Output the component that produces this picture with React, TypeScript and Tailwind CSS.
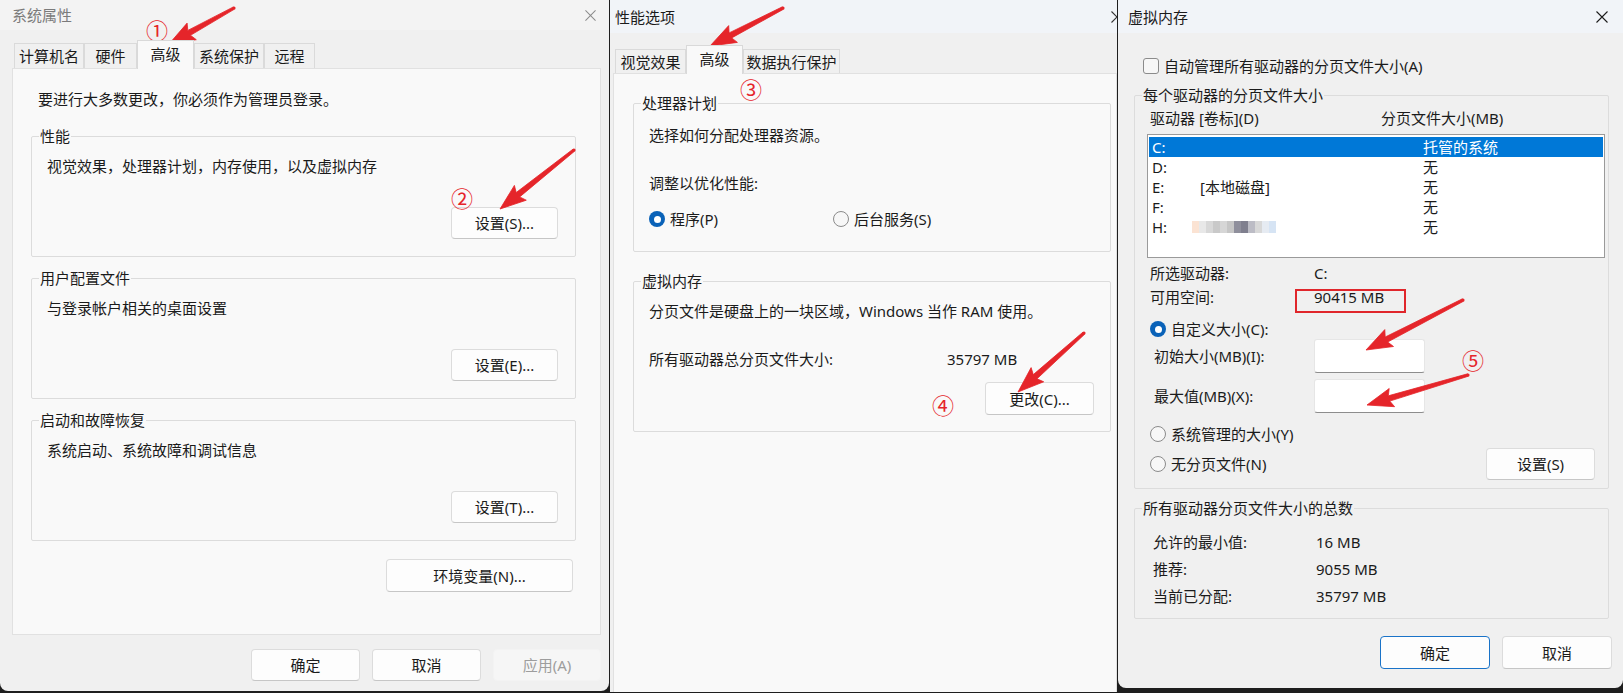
import type {ReactNode} from 'react';
import clsx from 'clsx';

const TEXT = 'text-[#1b1b1b]';

function CloseIcon({className}: {className?: string}) {
  return (
    <svg viewBox="0 0 12 12" className={className} fill="none" stroke="currentColor" strokeWidth={1.1}>
      <path d="M0.5 0.5l11 11M11.5 0.5l-11 11" />
    </svg>
  );
}

function Btn({children, className, disabled, primary}: {children: ReactNode; className?: string; disabled?: boolean; primary?: boolean}) {
  return (
    <button
      type="button"
      className={clsx(
        'flex shrink-0 items-center justify-center rounded-[4px] border text-[15px] leading-[20px]',
        disabled
          ? 'border-[#f3f3f3] bg-[#f6f6f6] text-[#9d9d9d]'
          : primary
            ? 'border-[#1a73c8] bg-[#fdfdfd] text-[#1b1b1b]'
            : 'border-[#dcdcdc] border-b-[#c6c6c6] bg-[#fdfdfd] text-[#1b1b1b]',
        className
      )}
    >
      {children}
    </button>
  );
}

function Group({title, bg, className, children}: {title: string; bg: string; className?: string; children: ReactNode}) {
  return (
    <div className={clsx('rounded-[2px] border border-[#dcdcdc]', className)}>
      <div className={clsx('relative -mt-[11px] ml-[7px] w-fit px-[1px] leading-[20px]', bg)}>{title}</div>
      {children}
    </div>
  );
}

function Radio({checked, label, className}: {checked?: boolean; label: string; className?: string}) {
  return (
    <div className={clsx('flex items-center gap-[5px] leading-[20px]', className)}>
      {checked ? (
        <span className="flex size-[16px] items-center justify-center rounded-full bg-[#0a62b8]">
          <span className="size-[7px] rounded-full bg-white" />
        </span>
      ) : (
        <span className="size-[16px] rounded-full border border-[#8b8b8b] bg-[#f7f7f7]" />
      )}
      <span>{label}</span>
    </div>
  );
}

type Tab = {label: string; width: string; active?: boolean};

function TabRow({tabs, short}: {tabs: Tab[]; short: string}) {
  return (
    <div className="flex items-end pl-[2px]">
      {tabs.map((tab) =>
        tab.active ? (
          <div
            key={tab.label}
            className={clsx('relative z-10 -mb-px flex h-[29px] items-start justify-center border border-b-0 border-[#d9d9d9] bg-[#f9f9f9] pt-[3px] leading-[20px]', tab.width)}
          >
            {tab.label}
          </div>
        ) : (
          <div key={tab.label} className={clsx('flex items-center justify-center border border-b-0 border-[#dadada] leading-[20px]', short, tab.width)}>
            {tab.label}
          </div>
        )
      )}
    </div>
  );
}

function SystemProperties() {
  const groups = [
    {title: '性能', text: '视觉效果，处理器计划，内存使用，以及虚拟内存', button: '设置(S)...'},
    {title: '用户配置文件', text: '与登录帐户相关的桌面设置', button: '设置(E)...'},
    {title: '启动和故障恢复', text: '系统启动、系统故障和调试信息', button: '设置(T)...'},
  ];

  return (
    <section className="flex h-[691px] w-[609px] shrink-0 flex-col overflow-hidden rounded-b-[8px] bg-[#f0f0f0]">
      <header className="flex h-[30px] items-center justify-between bg-[#f3f3f3] pl-[12px] pr-[13px] text-[#7b7b7b]">
        <span className="leading-[20px]">系统属性</span>
        <CloseIcon className="size-[11px] text-[#8a8a8a]" />
      </header>
      <div className="flex flex-col pl-[12px] pr-[8px] pt-[10px]">
        <TabRow
          short="h-[25px]"
          tabs={[
            {label: '计算机名', width: 'w-[70px]'},
            {label: '硬件', width: 'w-[53px]'},
            {label: '高级', width: 'w-[57px]', active: true},
            {label: '系统保护', width: 'w-[70px]'},
            {label: '远程', width: 'w-[51px]'},
          ]}
        />
        <div className="flex h-[567px] flex-col border border-[#e1e1e1] bg-[#f9f9f9]">
          <p className="ml-[25px] mt-[20px] leading-[20px]">要进行大多数更改，你必须作为管理员登录。</p>
          <div className="ml-[18px] mr-[24px] mt-[27px] flex flex-col gap-[21px]">
            {groups.map((g) => (
              <Group key={g.title} title={g.title} bg="bg-[#f9f9f9]" className="h-[121px]">
                <p className="ml-[15px] mt-[10px] leading-[20px]">{g.text}</p>
                <div className="mr-[17px] mt-[31px] flex justify-end">
                  <Btn className="h-[32px] w-[107px]">{g.button}</Btn>
                </div>
              </Group>
            ))}
          </div>
          <Btn className="mr-[27px] mt-[18px] h-[33px] w-[187px] self-end">环境变量(N)...</Btn>
        </div>
        <div className="mt-[14px] flex justify-end gap-[12px]">
          <Btn className="h-[32px] w-[109px]">确定</Btn>
          <Btn className="h-[32px] w-[109px]">取消</Btn>
          <Btn className="h-[32px] w-[108px]" disabled>
            应用(A)
          </Btn>
        </div>
      </div>
    </section>
  );
}

function PerformanceOptions() {
  return (
    <section className="flex h-[692px] w-[507px] shrink-0 flex-col overflow-hidden bg-[#f0f0f0]">
      <header className="flex h-[33px] items-center justify-between bg-[#f1f4f8] pl-[5px]">
        <span className="leading-[20px]">性能选项</span>
        <CloseIcon className="-mr-[6px] size-[12px] text-[#333]" />
      </header>
      <div className="flex flex-1 flex-col pl-[3px] pt-[12px]">
        <TabRow
          short="h-[24px]"
          tabs={[
            {label: '视觉效果', width: 'w-[71px]'},
            {label: '高级', width: 'w-[57px]', active: true},
            {label: '数据执行保护', width: 'w-[97px]'},
          ]}
        />
        <div className="flex flex-1 flex-col border border-b-0 border-[#e1e1e1] bg-[#f9f9f9] pl-[19px] pr-[5px]">
          <Group title="处理器计划" bg="bg-[#f9f9f9]" className="mt-[29px] pb-[22px]">
            <div className="pl-[15px]">
              <p className="mt-[12px] leading-[20px]">选择如何分配处理器资源。</p>
              <p className="mt-[28px] leading-[20px]">调整以优化性能:</p>
              <div className="mt-[16px] flex">
                <Radio checked label="程序(P)" className="w-[184px]" />
                <Radio label="后台服务(S)" />
              </div>
            </div>
          </Group>
          <Group title="虚拟内存" bg="bg-[#f9f9f9]" className="mt-[29px] pb-[16px]">
            <div className="pl-[15px] pr-[16px]">
              <p className="mt-[10px] leading-[20px]">分页文件是硬盘上的一块区域，Windows 当作 RAM 使用。</p>
              <div className="mt-[28px] flex leading-[20px]">
                <span className="w-[298px]">所有驱动器总分页文件大小:</span>
                <span>35797 MB</span>
              </div>
              <div className="mt-[13px] flex justify-end">
                <Btn className="h-[33px] w-[109px]">更改(C)...</Btn>
              </div>
            </div>
          </Group>
        </div>
      </div>
    </section>
  );
}

const drives = [
  {drive: 'C:', label: '', size: '托管的系统'},
  {drive: 'D:', label: '', size: '无'},
  {drive: 'E:', label: '[本地磁盘]', size: '无'},
  {drive: 'F:', label: '', size: '无'},
  {drive: 'H:', label: null, size: '无'},
];

const mosaic = ['#fbe3d3', '#e8e8e8', '#d8d8d8', '#c9c9c9', '#d6d6d6', '#c6c6c6', '#8f8f9c', '#7f7f8e', '#bcbcc5', '#d8d8d8', '#e6ebf2', '#d6e4f4'];

function HiddenLabel() {
  return (
    <span className="-ml-[8px] flex h-[12px] blur-[0.5px]">
      {mosaic.map((c, i) => (
        <span key={i} className="h-full w-[7px]" style={{backgroundColor: c}} />
      ))}
    </span>
  );
}

function VirtualMemory() {
  return (
    <section className="flex h-[688px] w-[505px] shrink-0 flex-col overflow-hidden rounded-b-[8px] bg-[#f0f0f0]">
      <header className="flex h-[33px] items-center justify-between bg-[#f1f4f8] pl-[10px] pr-[15px]">
        <span className="leading-[20px]">虚拟内存</span>
        <CloseIcon className="size-[12px] text-[#1b1b1b]" />
      </header>
      <div className="flex flex-col pl-[16px] pr-[14px]">
        <label className="ml-[9px] mt-[23px] flex items-center gap-[5px] leading-[20px]">
          <span className="size-[16px] rounded-[3px] border border-[#8b8b8b] bg-[#f7f7f7]" />
          自动管理所有驱动器的分页文件大小(A)
        </label>

        <Group title="每个驱动器的分页文件大小" bg="bg-[#f0f0f0]" className="mt-[19px] pb-[8px]">
          <div className="ml-[15px] mt-[3px] flex leading-[20px]">
            <span className="w-[231px]">驱动器 [卷标](D)</span>
            <span>分页文件大小(MB)</span>
          </div>
          <div className="ml-[12px] mr-[3px] mt-[6px] h-[124px] border border-[#9a9a9a] bg-white px-px pt-[2px]">
            {drives.map((d, i) => (
              <div key={d.drive} className={clsx('flex h-[20px] items-center pl-[3px] leading-[20px]', i === 0 && 'bg-[#0078d7] text-white')}>
                <span className="w-[48px]">{d.drive}</span>
                <span className="flex w-[223px] items-center">{d.label === null ? <HiddenLabel /> : d.label}</span>
                <span>{d.size}</span>
              </div>
            ))}
          </div>
          <div className="ml-[15px] mt-[5px] flex leading-[20px]">
            <span className="w-[164px]">所选驱动器:</span>
            <span>C:</span>
          </div>
          <div className="ml-[15px] mt-[4px] flex leading-[20px]">
            <span className="w-[164px]">可用空间:</span>
            <span>90415 MB</span>
          </div>
          <Radio checked label="自定义大小(C):" className="ml-[15px] mt-[12px]" />
          <div className="ml-[19px] flex h-[34px] items-center">
            <span className="w-[160px]">初始大小(MB)(I):</span>
            <span className="h-full w-[111px] rounded-[3px] border border-[#e6e6e6] border-b-[#8d8d8d] bg-white" />
          </div>
          <div className="ml-[19px] mt-[6px] flex h-[34px] items-center">
            <span className="w-[160px]">最大值(MB)(X):</span>
            <span className="h-full w-[111px] rounded-[3px] border border-[#e6e6e6] border-b-[#8d8d8d] bg-white" />
          </div>
          <Radio label="系统管理的大小(Y)" className="ml-[15px] mt-[11px]" />
          <div className="ml-[15px] mr-[13px] mt-[4px] flex h-[32px] items-center justify-between">
            <Radio label="无分页文件(N)" />
            <Btn className="h-[32px] w-[109px]">设置(S)</Btn>
          </div>
        </Group>

        <Group title="所有驱动器分页文件大小的总数" bg="bg-[#f0f0f0]" className="mt-[19px] pb-[12px]">
          <div className="ml-[18px] mt-[14px] flex flex-col gap-[7px] leading-[20px]">
            {[
              ['允许的最小值:', '16 MB'],
              ['推荐:', '9055 MB'],
              ['当前已分配:', '35797 MB'],
            ].map(([k, v]) => (
              <div key={k} className="flex">
                <span className="w-[163px]">{k}</span>
                <span>{v}</span>
              </div>
            ))}
          </div>
        </Group>

        <div className="mr-[-3px] mt-[17px] flex justify-end gap-[12px]">
          <Btn primary className="h-[33px] w-[110px]">
            确定
          </Btn>
          <Btn className="h-[33px] w-[110px]">取消</Btn>
        </div>
      </div>
    </section>
  );
}

// red callout arrows drawn over the dialogs
function arrowPoints(x1: number, y1: number, x2: number, y2: number) {
  const dx = x2 - x1;
  const dy = y2 - y1;
  const len = Math.hypot(dx, dy);
  const ux = dx / len;
  const uy = dy / len;
  const nx = -uy;
  const ny = ux;
  const headLen = 23;
  const headW = 9.5;
  const neck = 2.8;
  const tail = 1.3;
  const bx = x2 - ux * headLen;
  const by = y2 - uy * headLen;
  const pts = [
    [x1 + nx * tail, y1 + ny * tail],
    [bx + nx * neck, by + ny * neck],
    [bx - ux * 3 + nx * headW, by - uy * 3 + ny * headW],
    [x2, y2],
    [bx - ux * 3 - nx * headW, by - uy * 3 - ny * headW],
    [bx - nx * neck, by - ny * neck],
    [x1 - nx * tail, y1 - ny * tail],
  ];
  return pts.map((p) => p.map((n) => n.toFixed(1)).join(',')).join(' ');
}

const arrows: [number, number, number, number][] = [
  [234, 8, 169, 44],
  [574, 150, 500, 209],
  [783, 8, 710, 46],
  [1084, 333, 1018, 392],
  [1463, 300, 1366, 350],
  [1468, 375, 1367, 405],
];

function Callouts() {
  return (
    <div className="pointer-events-none absolute inset-0">
      <svg className="absolute inset-0 h-full w-full" viewBox="0 0 1623 693">
        {arrows.map(([a, b, c, d], i) => (
          <g key={i} fill="#e5252a">
            <polygon points={arrowPoints(a, b, c, d)} strokeLinejoin="round" stroke="#e5252a" strokeWidth={0.8} />
            <circle cx={a} cy={b} r={1.6} />
          </g>
        ))}
      </svg>
      <div className="absolute left-[1295px] top-[289px] h-[24px] w-[111px] border-2 border-[#e0262b]" />
      <span className="absolute left-[157px] top-[30px] -translate-x-1/2 -translate-y-1/2 text-[22px] leading-none text-[#e5252a]">①</span>
      <span className="absolute left-[462px] top-[198px] -translate-x-1/2 -translate-y-1/2 text-[22px] leading-none text-[#e5252a]">②</span>
      <span className="absolute left-[751px] top-[89px] -translate-x-1/2 -translate-y-1/2 text-[22px] leading-none text-[#e5252a]">③</span>
      <span className="absolute left-[943px] top-[405px] -translate-x-1/2 -translate-y-1/2 text-[22px] leading-none text-[#e5252a]">④</span>
      <span className="absolute left-[1473px] top-[360px] -translate-x-1/2 -translate-y-1/2 text-[22px] leading-none text-[#e5252a]">⑤</span>
    </div>
  );
}

export default function App() {
  return (
    <div
      className={clsx(
        "relative flex h-[693px] w-[1623px] gap-px overflow-hidden bg-[#1e1e1e] font-['Noto_Sans','Noto_Sans_CJK_SC',sans-serif] text-[15px]",
        TEXT
      )}
    >
      <SystemProperties />
      <PerformanceOptions />
      <VirtualMemory />
      <Callouts />
    </div>
  );
}
